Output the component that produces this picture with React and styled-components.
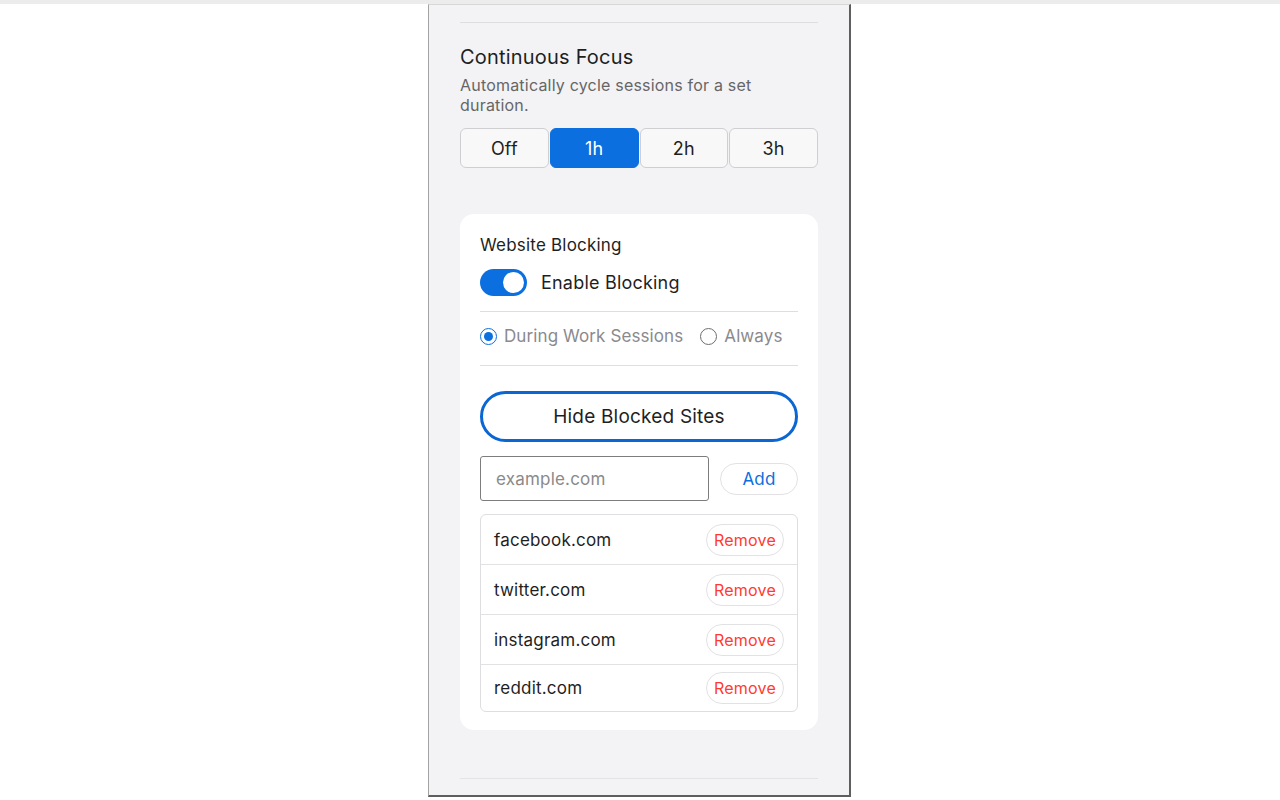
import styled, {createGlobalStyle} from 'styled-components'
import {useState} from 'react'

const GlobalStyle = createGlobalStyle`
  html, body {
    margin: 0;
    padding: 0;
    background: #ffffff;
    font-family: Inter, "Noto Sans", "Liberation Sans", sans-serif;
    letter-spacing: 0.2px;
    -webkit-font-smoothing: antialiased;
  }
  * {
    box-sizing: border-box;
  }
`

const Page = styled.div`
  height: 800px;
  display: flex;
  justify-content: center;
  padding-top: 4px;
  overflow: hidden;
  background: linear-gradient(#ececec, #ececec) top / 100% 4px no-repeat, #fff;
`

const Panel = styled.div`
  width: 423px;
  height: 793px;
  margin-right: 1px;
  background: #f3f3f6;
  border-left: 1px solid #a3a3a3;
  border-right: 2px solid #5e5e5e;
  border-bottom: 2px solid #5e5e5e;
  border-top: 1px solid #d8d8d8;
  padding: 17px 31px 0 31px;
  display: flex;
  flex-direction: column;
`

const Divider = styled.hr`
  border: none;
  height: 1px;
  margin: ${({$m}) => $m || '0'};
  background: ${({$light}) => ($light ? '#e3e3e6' : '#dedee2')};
`

const Title = styled.h2`
  margin: 22px 0 0;
  font-size: 20px;
  line-height: 24px;
  font-weight: 400;
  color: #1f1f1f;
`

const Description = styled.p`
  margin: 7px 0 0;
  max-width: 320px;
  font-size: 16px;
  line-height: 19.5px;
  color: #666;
`

const Segments = styled.div`
  margin-top: 13px;
  display: grid;
  grid-template-columns: repeat(4, 1fr);
  gap: 1px;
`

const Segment = styled.button`
  height: 40px;
  border-radius: 6px;
  border: 1px solid ${({$active}) => ($active ? '#0b6fe0' : '#cfcfd2')};
  background: ${({$active}) => ($active ? '#0b6fe0' : '#f8f8f8')};
  color: ${({$active}) => ($active ? '#fff' : '#1f1f1f')};
  font-family: inherit;
  letter-spacing: inherit;
  font-size: 18px;
  padding: 0;
  cursor: pointer;
`

const Card = styled.section`
  margin-top: 46px;
  background: #fff;
  border-radius: 14px;
  padding: 21px 20px 18px;
`

const CardTitle = styled.h3`
  margin: 0;
  font-size: 17px;
  line-height: 20px;
  font-weight: 400;
  color: #1f1f1f;
`

const ToggleRow = styled.label`
  margin-top: 14px;
  display: flex;
  align-items: center;
  gap: 14px;
  font-size: 18px;
  color: #1f1f1f;
`

const Switch = styled.span`
  width: 47px;
  height: 27px;
  border-radius: 14px;
  background: ${({$on}) => ($on ? '#0b6fe0' : '#d4d4d8')};
  display: flex;
  align-items: center;
  justify-content: ${({$on}) => ($on ? 'flex-end' : 'flex-start')};
  padding: 0 3px;
  cursor: pointer;

  &::after {
    content: '';
    width: 21px;
    height: 21px;
    border-radius: 50%;
    background: #fff;
  }
`

const RadioRow = styled.div`
  display: flex;
  align-items: center;
  gap: 17px;
  height: 20px;
`

const RadioLabel = styled.label`
  display: flex;
  align-items: center;
  gap: 7px;
  font-size: 17px;
  letter-spacing: 0.1px;
  color: #8a8a8e;
  cursor: pointer;
`

const RadioDot = styled.span`
  width: 17px;
  height: 17px;
  border-radius: 50%;
  border: 1.5px solid ${({$checked}) => ($checked ? '#0b6fe0' : '#6e6e73')};
  display: flex;
  align-items: center;
  justify-content: center;

  &::after {
    content: '';
    width: 9px;
    height: 9px;
    border-radius: 50%;
    background: ${({$checked}) => ($checked ? '#0b6fe0' : 'transparent')};
  }
`

const OutlineButton = styled.button`
  width: 100%;
  height: 51px;
  border-radius: 26px;
  border: 3px solid #0a66d2;
  background: #fff;
  color: #1f1f1f;
  font-family: inherit;
  letter-spacing: inherit;
  font-size: 19px;
  cursor: pointer;
`

const AddRow = styled.div`
  margin-top: 14px;
  display: flex;
  align-items: center;
  gap: 11px;
`

const Input = styled.input`
  width: 229px;
  height: 45px;
  border: 1px solid #7d7d7d;
  border-radius: 3px;
  padding: 0 15px;
  font-family: inherit;
  letter-spacing: inherit;
  font-size: 17px;
  color: #1f1f1f;
  outline: none;

  &::placeholder {
    color: #8a8a8a;
  }
`

const PillButton = styled.button`
  height: 32px;
  width: 78px;
  border-radius: 16px;
  border: 1px solid #e2e2e4;
  background: #fff;
  color: ${({$danger}) => ($danger ? '#ff3b30' : '#0b6fe0')};
  font-family: inherit;
  letter-spacing: inherit;
  font-size: ${({$danger}) => ($danger ? '16px' : '17px')};
  padding: 0;
  cursor: pointer;
`

const SiteList = styled.ul`
  list-style: none;
  margin: 13px 0 0;
  padding: 0;
  border: 1px solid #dedee0;
  border-radius: 6px;
`

const SiteRow = styled.li`
  height: 50px;
  display: flex;
  align-items: center;
  justify-content: space-between;
  padding: 0 13px;
  font-size: 17px;
  color: #1f1f1f;
  border-bottom: 1px solid #e2e2e4;

  &:last-child {
    height: 46px;
    border-bottom: none;
  }
`

const durations = ['Off', '1h', '2h', '3h']

const App = () => {
  const [duration, setDuration] = useState('1h')
  const [enabled, setEnabled] = useState(true)
  const [mode, setMode] = useState('work')
  const [sites, setSites] = useState(['facebook.com', 'twitter.com', 'instagram.com', 'reddit.com'])
  const [draft, setDraft] = useState('')

  const addSite = () => {
    if (!draft.trim()) return
    setSites([...sites, draft.trim()])
    setDraft('')
  }

  return (
    <>
      <GlobalStyle/>
      <Page>
        <Panel>
          <Divider/>
          <Title>Continuous Focus</Title>
          <Description>Automatically cycle sessions for a set duration.</Description>
          <Segments>
            {durations.map(d => (
              <Segment key={d} $active={d === duration} onClick={() => setDuration(d)}>{d}</Segment>
            ))}
          </Segments>

          <Card>
            <CardTitle>Website Blocking</CardTitle>
            <ToggleRow onClick={() => setEnabled(!enabled)}>
              <Switch $on={enabled}/>
              Enable Blocking
            </ToggleRow>
            <Divider $m="15px 0 14px"/>
            <RadioRow>
              <RadioLabel onClick={() => setMode('work')}>
                <RadioDot $checked={mode === 'work'}/>
                During Work Sessions
              </RadioLabel>
              <RadioLabel onClick={() => setMode('always')}>
                <RadioDot $checked={mode === 'always'}/>
                Always
              </RadioLabel>
            </RadioRow>
            <Divider $m="19px 0 25px"/>
            <OutlineButton>Hide Blocked Sites</OutlineButton>
            <AddRow>
              <Input placeholder="example.com" value={draft} onChange={e => setDraft(e.target.value)}/>
              <PillButton onClick={addSite}>Add</PillButton>
            </AddRow>
            <SiteList>
              {sites.map(site => (
                <SiteRow key={site}>
                  {site}
                  <PillButton $danger onClick={() => setSites(sites.filter(s => s !== site))}>Remove</PillButton>
                </SiteRow>
              ))}
            </SiteList>
          </Card>

          <Divider $light $m="48px 0 0"/>
        </Panel>
      </Page>
    </>
  )
}

export default App
